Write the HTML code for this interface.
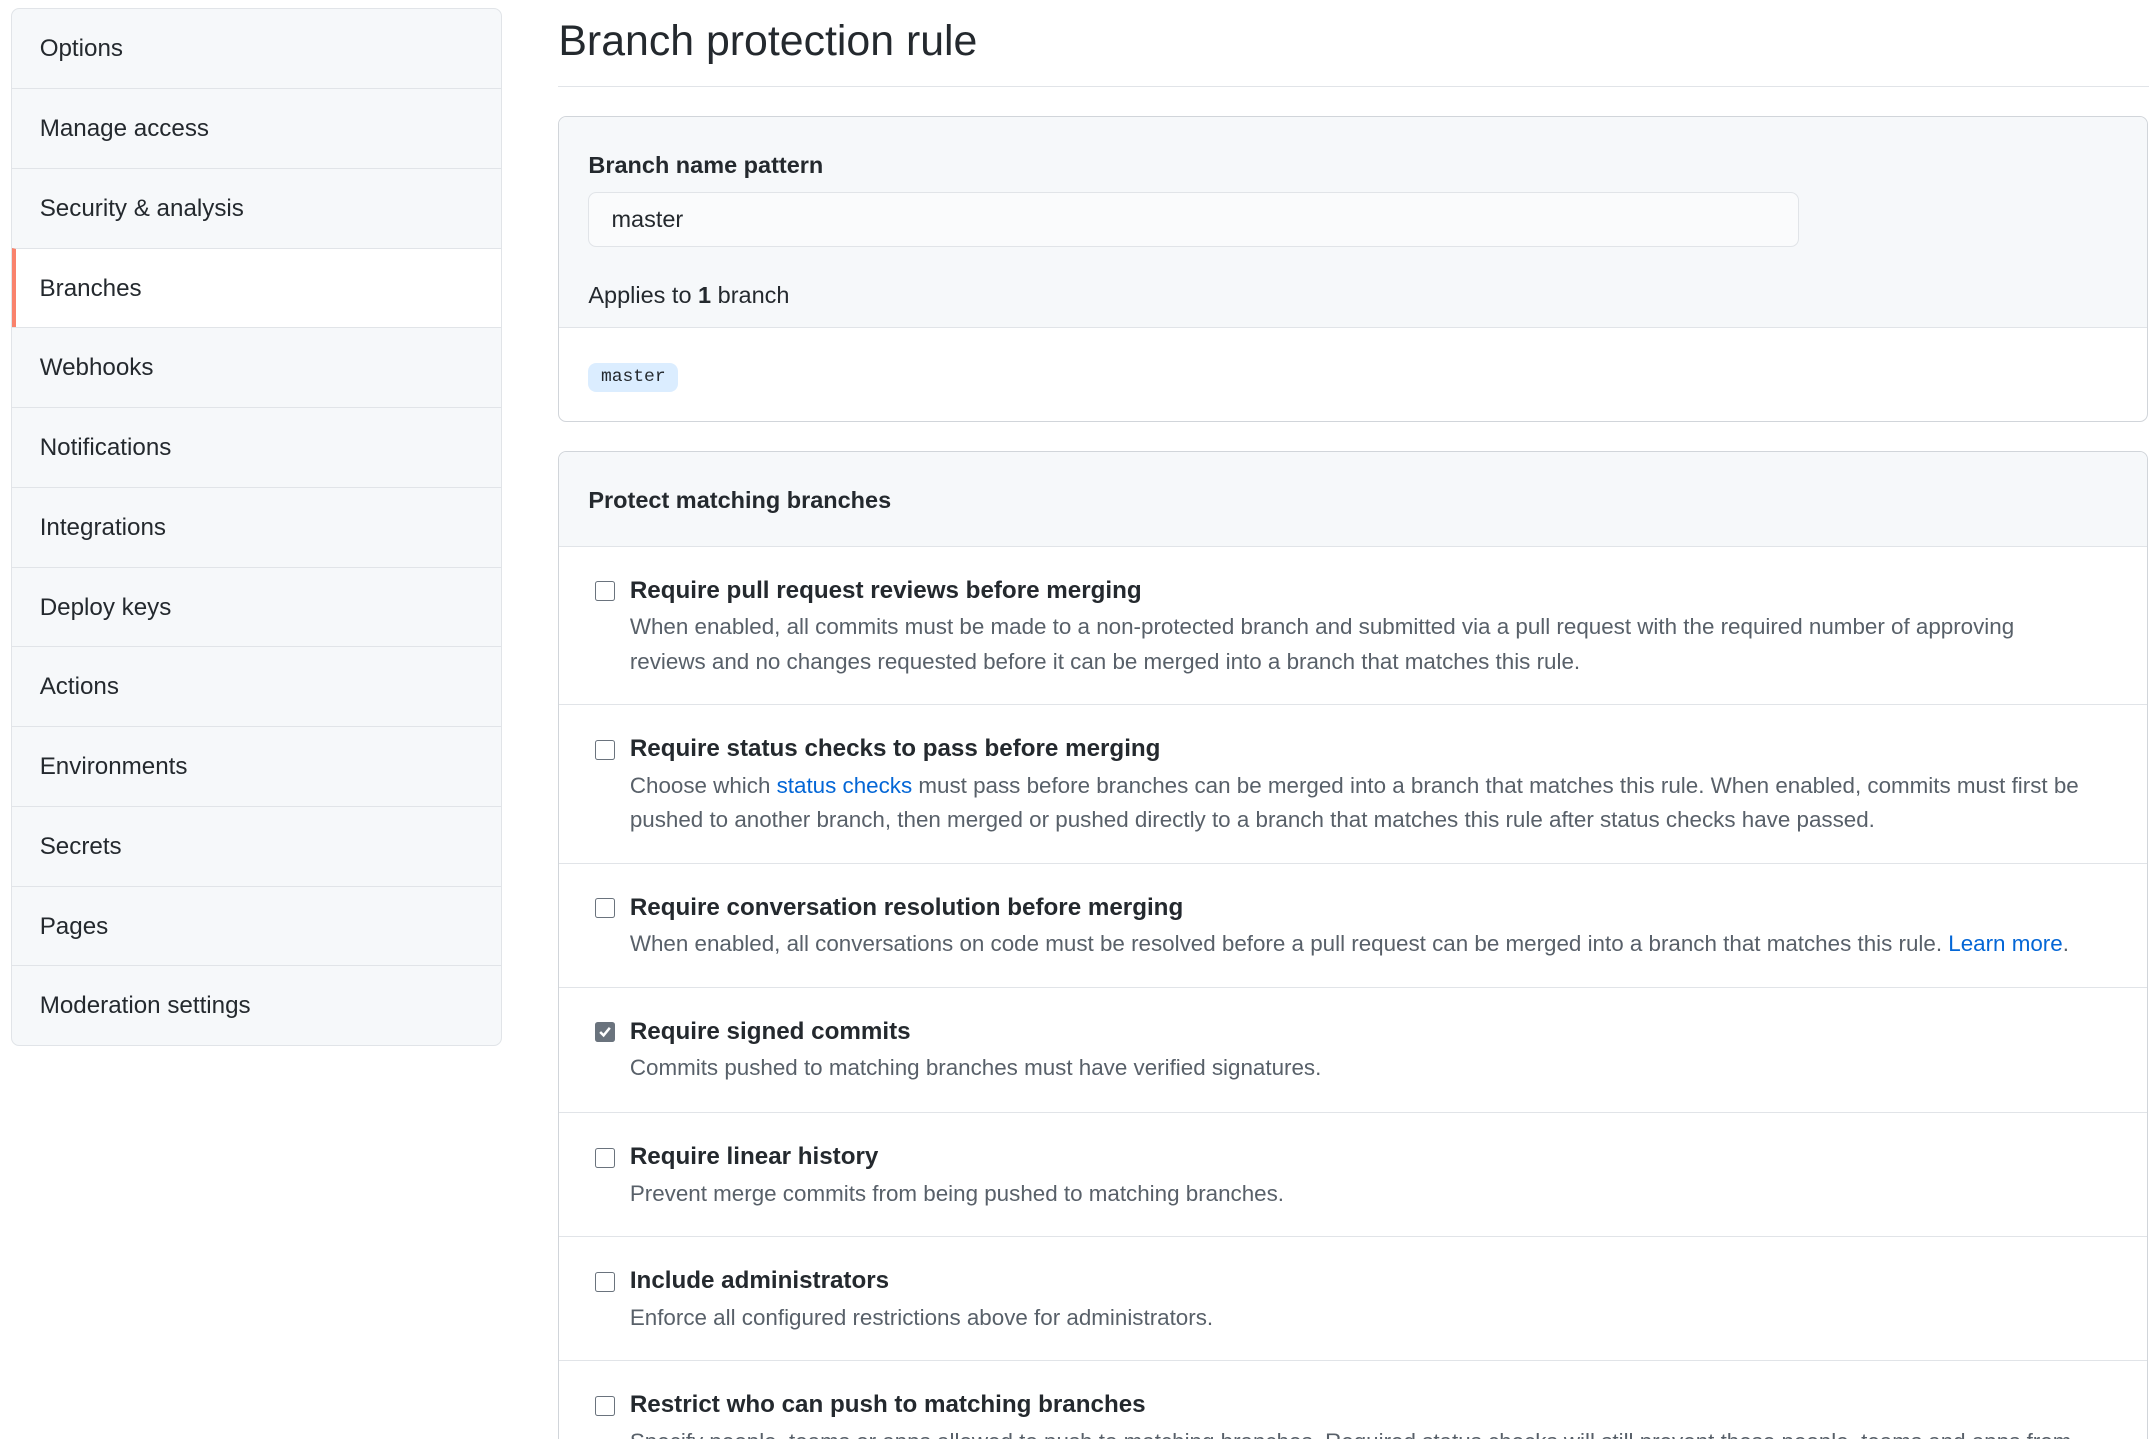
<!DOCTYPE html>
<html><head><meta charset="utf-8"><style>
html,body{margin:0;padding:0;background:#fff;}
body{width:2156px;height:1440px;overflow:hidden;font-family:"Liberation Sans",Arial,sans-serif;color:#24292e;}
#w{zoom:1.3821;width:1560px;height:1041px;position:relative;overflow:hidden;}
.side{position:absolute;left:8px;top:6px;width:354px;border:1px solid #e1e4e8;border-radius:6px;background:#f6f8fa;overflow:hidden;}
.side div{height:57px;border-top:1px solid #e1e4e8;line-height:58px;padding-left:20px;font-size:17.5px;}
.side div:first-child{border-top:none;}
.side .act{background:#fff;border-left:3px solid #f9826c;padding-left:17px;}
h1{position:absolute;left:404px;top:12px;margin:0;font-size:31px;font-weight:400;}
.hr{position:absolute;left:404px;top:62px;width:1151px;height:1px;background:#e1e4e8;}
.box{position:absolute;left:404px;width:1149px;border:1px solid #d1d5da;border-radius:6px;overflow:hidden;background:#fff;}
.b1{top:84px;height:220px;}
.b1 .top{background:#f6f8fa;height:152px;border-bottom:1px solid #e1e4e8;position:relative;}
.lbl{position:absolute;left:21px;font-weight:bold;font-size:17px;}
.inp{position:absolute;left:21px;top:54px;width:876px;height:40px;border:1px solid #e1e4e8;border-radius:6px;background:#fafbfc;font-size:17px;line-height:39px;padding-left:16px;box-sizing:border-box;}
.chip{position:absolute;left:21px;top:178px;width:65px;height:21px;background:#dbedff;border-radius:6px;font-family:"Liberation Mono",monospace;font-size:13px;line-height:21px;text-align:center;color:#24292e;}
.b2{top:326px;height:800px;}
.hd{background:#f6f8fa;height:68px;border-bottom:1px solid #e1e4e8;font-weight:bold;font-size:17px;line-height:70px;padding-left:21px;}
.row{position:relative;border-bottom:1px solid #e1e4e8;}
.cb{position:absolute;left:26px;width:13px;height:13px;border:1px solid #6a737d;border-radius:2px;background:#fff;}
.cb.on{background:#6a737d;}
.t{position:absolute;left:51px;font-size:17.5px;font-weight:bold;color:#24292e;}
.d{position:absolute;left:51px;font-size:16.2px;color:#586069;line-height:25px;width:1065px;}
a{color:#0366d6;text-decoration:none;}
</style></head><body><div id="w">
<div class="side">
<div>Options</div><div>Manage access</div><div>Security &amp; analysis</div><div class="act">Branches</div><div>Webhooks</div><div>Notifications</div><div>Integrations</div><div>Deploy keys</div><div>Actions</div><div>Environments</div><div>Secrets</div><div>Pages</div><div>Moderation settings</div>
</div>
<h1>Branch protection rule</h1>
<div class="hr"></div>
<div class="box b1"><div class="top">
<div class="lbl" style="top:25px">Branch name pattern</div>
<div class="inp">master</div>
<div style="position:absolute;left:21px;top:119px;font-size:17px">Applies to <b>1</b> branch</div>
</div><div class="chip">master</div></div>
<div class="box b2">
<div class="hd">Protect matching branches</div>
<div class="row" style="height:114px"><div class="cb" style="top:25px"></div><div class="t" style="top:22px">Require pull request reviews before merging</div><div class="d" style="top:46px;width:1050px">When enabled, all commits must be made to a non-protected branch and submitted via a pull request with the required number of approving reviews and no changes requested before it can be merged into a branch that matches this rule.</div></div>
<div class="row" style="height:114px"><div class="cb" style="top:25px"></div><div class="t" style="top:22px">Require status checks to pass before merging</div><div class="d" style="top:46px">Choose which <a>status checks</a> must pass before branches can be merged into a branch that matches this rule. When enabled, commits must first be pushed to another branch, then merged or pushed directly to a branch that matches this rule after status checks have passed.</div></div>
<div class="row" style="height:89px"><div class="cb" style="top:25px"></div><div class="t" style="top:22px">Require conversation resolution before merging</div><div class="d" style="top:46px">When enabled, all conversations on code must be resolved before a pull request can be merged into a branch that matches this rule. <a>Learn more</a>.</div></div>
<div class="row" style="height:90px"><div class="cb on" style="top:25px"><svg width="13" height="13" viewBox="0 0 13 13" style="position:absolute;left:0;top:0"><path d="M3 6.5l2.5 2.5L10 3.5" stroke="#fff" stroke-width="1.8" fill="none"/></svg></div><div class="t" style="top:22px">Require signed commits</div><div class="d" style="top:46px">Commits pushed to matching branches must have verified signatures.</div></div>
<div class="row" style="height:89px"><div class="cb" style="top:25px"></div><div class="t" style="top:22px">Require linear history</div><div class="d" style="top:46px">Prevent merge commits from being pushed to matching branches.</div></div>
<div class="row" style="height:89px"><div class="cb" style="top:25px"></div><div class="t" style="top:22px">Include administrators</div><div class="d" style="top:46px">Enforce all configured restrictions above for administrators.</div></div>
<div class="row" style="height:114px;border-bottom:none"><div class="cb" style="top:25px"></div><div class="t" style="top:22px">Restrict who can push to matching branches</div><div class="d" style="top:46px">Specify people, teams or apps allowed to push to matching branches. Required status checks will still prevent these people, teams and apps from merging if the checks fail.</div></div>
</div>
</div></body></html>
